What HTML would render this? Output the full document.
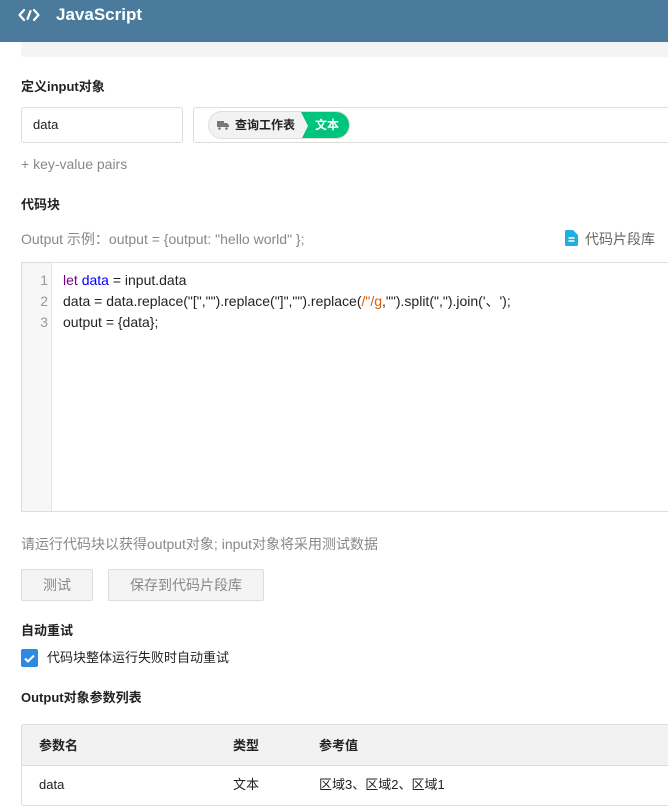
<!DOCTYPE html>
<html><head><meta charset="utf-8"><style>
*{box-sizing:border-box;margin:0;padding:0}
body{width:668px;height:812px;overflow:hidden;background:#fff;font-family:"Liberation Sans","Noto Sans CJK SC",sans-serif;font-size:13px;color:#222;position:relative}
.abs{position:absolute;line-height:18px;white-space:nowrap}
.hdr{left:0;top:0;width:668px;height:42px;background:#4a7b9d;color:#fff}
.lbl{font-weight:bold;font-size:13px;color:#222}
.box{border:1px solid #ddd;border-radius:3px;background:#fff}
.btn{border:1px solid #ddd;border-radius:2px;background:#f4f4f4;color:#888;font-size:14px;text-align:center;line-height:30px}
.ln{color:#999;text-align:right;width:26px;font-size:14px;line-height:21px}
.cl{left:41px;font-size:14px;line-height:21px;height:21px}
</style></head><body>
<div class="abs hdr">
<svg class="abs" style="left:18px;top:7px" width="22" height="16" viewBox="0 0 22 16"><path d="M6 3L1.5 8L6 13M16 3L20.5 8L16 13M12.5 4L9.5 12" stroke="#fff" stroke-width="2.2" fill="none" stroke-linecap="round" stroke-linejoin="round"/></svg>
<div class="abs" style="left:56px;top:4px;font-size:17px;font-weight:bold;line-height:22px">JavaScript</div>
</div>
<div class="abs" style="left:21px;top:42px;width:647px;height:15px;background:#f4f4f4;border-radius:0 0 0 3px"></div>
<div class="abs lbl" style="left:21px;top:78px">定义input对象</div>
<div class="abs box" style="left:21px;top:107px;width:162px;height:36px;padding:8px 11px;font-size:13px">data</div>
<div class="abs box" style="left:193px;top:107px;width:480px;height:36px"></div>
<div class="abs" style="left:208px;top:111px;width:142px;height:28px;border-radius:14px;background:#f2f2f2;border:1px solid #ddd;overflow:hidden">
<svg class="abs" style="left:8px;top:9px" width="12" height="9" viewBox="0 0 12 9"><path d="M0 0h7v6H0zM7 2h3l2 2v2H7z" fill="#777"/><circle cx="2.5" cy="7.5" r="1.3" fill="#777"/><circle cx="9.5" cy="7.5" r="1.3" fill="#777"/></svg>
<div class="abs" style="left:26px;top:4px;font-weight:bold;font-size:12px;color:#222">查询工作表</div>
<div class="abs" style="left:92px;top:0;width:50px;height:28px;background:#00c47e;clip-path:polygon(0 0,100% 0,100% 100%,0 100%,7px 50%)"></div>
<div class="abs" style="left:106px;top:4px;font-weight:bold;font-size:12px;color:#fff">文本</div>
</div>
<div class="abs" style="left:21px;top:155px;color:#888;font-size:14px">+ key-value pairs</div>
<div class="abs lbl" style="left:21px;top:196px">代码块</div>
<div class="abs" style="left:21px;top:230px;color:#888;font-size:14px">Output 示例：output = {output: "hello world" };</div>
<svg class="abs" style="left:565px;top:230px" width="13" height="16" viewBox="0 0 13 16"><path d="M0 1.5A1.5 1.5 0 0 1 1.5 0H8l5 5v9.5A1.5 1.5 0 0 1 11.5 16h-10A1.5 1.5 0 0 1 0 14.5z" fill="#1fb0e0"/><path d="M3.5 8h6M3.5 11h6" stroke="#fff" stroke-width="1.4"/></svg>
<div class="abs" style="left:585px;top:230px;color:#666;font-size:14px">代码片段库</div>
<div class="abs" style="left:21px;top:262px;width:660px;height:250px;border:1px solid #ddd;background:#fff">
<div class="abs" style="left:0;top:0;width:30px;height:248px;background:#f7f7f7;border-right:1px solid #e6e6e6"></div>
<div class="abs ln" style="left:0;top:7px">1</div>
<div class="abs ln" style="left:0;top:28px">2</div>
<div class="abs ln" style="left:0;top:49px">3</div>
<div class="abs cl" style="top:7px"><span style="color:#770088">let</span> <span style="color:#0000ff">data</span> = input.data</div>
<div class="abs cl" style="top:28px">data = data.replace("[","").replace("]","").replace(<span style="color:#e05a00">/"/g</span>,"").split(",").join('、');</div>
<div class="abs cl" style="top:49px">output = {data};</div>
</div>
<div class="abs" style="left:21px;top:535px;color:#888;font-size:14px">请运行代码块以获得output对象; input对象将采用测试数据</div>
<div class="abs btn" style="left:21px;top:569px;width:72px;height:32px">测试</div>
<div class="abs btn" style="left:108px;top:569px;width:156px;height:32px">保存到代码片段库</div>
<div class="abs lbl" style="left:21px;top:622px">自动重试</div>
<div class="abs" style="left:21px;top:649px;width:17px;height:18px;background:#2d8ae0;border-radius:2px"><svg width="17" height="18"><path d="M4 9.5l3 3 6-6" stroke="#fff" stroke-width="2" fill="none"/></svg></div>
<div class="abs" style="left:47px;top:649px;color:#222">代码块整体运行失败时自动重试</div>
<div class="abs lbl" style="left:21px;top:689px">Output对象参数列表</div>
<div class="abs" style="left:21px;top:724px;width:660px;height:82px;border:1px solid #ddd;border-radius:3px;overflow:hidden">
<div class="abs" style="left:0;top:0;width:660px;height:41px;background:#f2f2f2;border-bottom:1px solid #ddd"></div>
<div class="abs" style="left:17px;top:12px;font-weight:bold">参数名</div>
<div class="abs" style="left:211px;top:12px;font-weight:bold">类型</div>
<div class="abs" style="left:297px;top:12px;font-weight:bold">参考值</div>
<div class="abs" style="left:17px;top:51px">data</div>
<div class="abs" style="left:211px;top:51px">文本</div>
<div class="abs" style="left:297px;top:51px">区域3、区域2、区域1</div>
</div>
</body></html>
